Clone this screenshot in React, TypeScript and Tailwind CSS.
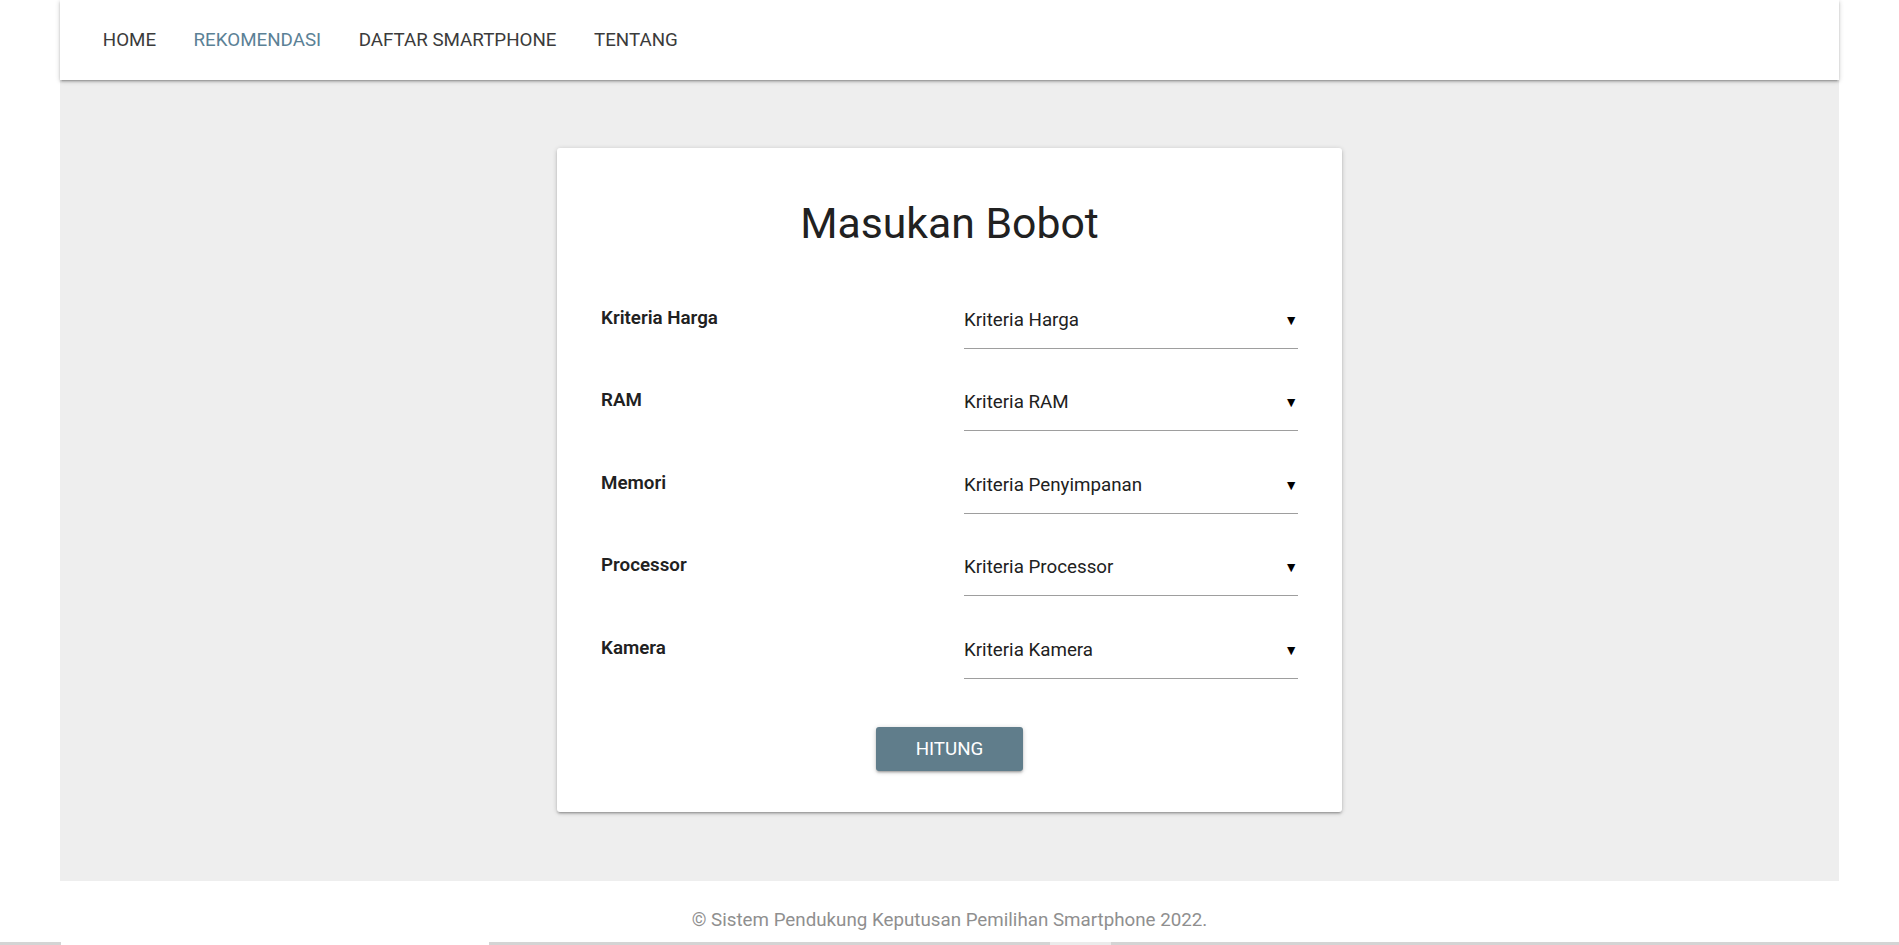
const NAV_LINKS = ['HOME', 'REKOMENDASI', 'DAFTAR SMARTPHONE', 'TENTANG'];

const CRITERIA = [
  { label: 'Kriteria Harga', placeholder: 'Kriteria Harga' },
  { label: 'RAM', placeholder: 'Kriteria RAM' },
  { label: 'Memori', placeholder: 'Kriteria Penyimpanan' },
  { label: 'Processor', placeholder: 'Kriteria Processor' },
  { label: 'Kamera', placeholder: 'Kriteria Kamera' },
];

const SHADOW =
  'shadow-[0_2px_2px_0_rgba(0,0,0,0.14),0_3px_1px_-2px_rgba(0,0,0,0.12),0_1px_5px_0_rgba(0,0,0,0.2)]';

function Navbar() {
  return (
    <nav className={`relative z-10 flex h-[80px] items-center bg-white pl-[24px] ${SHADOW}`}>
      {NAV_LINKS.map((link) => (
        <a
          key={link}
          href="#"
          className={
            'px-[18.75px] text-[18.75px] leading-[80px] ' +
            (link === 'REKOMENDASI' ? 'text-[#5b8196]' : 'text-[#3b3b3b]')
          }
        >
          {link}
        </a>
      ))}
    </nav>
  );
}

function CriteriaRow({ label, placeholder }: { label: string; placeholder: string }) {
  return (
    <div className="grid grid-cols-2 gap-x-[29px]">
      <div className="flex h-[57px] items-center pb-[5px] text-[18.75px] font-semibold text-[#212121]">
        {label}
      </div>
      <div className="flex h-[57px] items-center justify-between border-b border-[#9e9e9e] text-[18.75px] text-[#212121]">
        <span>{placeholder}</span>
        <span className="text-[14px] leading-none text-black">▼</span>
      </div>
    </div>
  );
}

export default function App() {
  return (
    <div className="min-h-[945px] bg-white font-['Roboto',sans-serif]">
      <div className="mx-[60px]">
        <Navbar />

        {/* Main content */}
        <main className="bg-[#eeeeee] pb-[69px] pt-[68px]">
          <div className={`mx-auto w-[785px] rounded-[3px] bg-white px-[44px] pb-[41px] pt-[49px] ${SHADOW}`}>
            <h1 className="text-center text-[42.75px] leading-[52px] text-[#212121]">Masukan Bobot</h1>

            <div className="mt-[43px] flex flex-col gap-[25.4px]">
              {CRITERIA.map((c) => (
                <CriteriaRow key={c.label} {...c} />
              ))}
            </div>

            <div className="mt-[48px] flex justify-center">
              <button
                className={`h-[44px] w-[147px] rounded-[3px] bg-[#607d8b] text-[18.75px] font-normal text-white ${SHADOW}`}
              >
                HITUNG
              </button>
            </div>
          </div>
        </main>

        <footer className="h-[61px] pt-[28px] text-center text-[18.75px] leading-[22px] text-[#8f8f8f]">
          © Sistem Pendukung Keputusan Pemilihan Smartphone 2022.
        </footer>
      </div>

      {/* horizontal scrollbar strip */}
      <div className="flex h-[4px] bg-[#d4d4d4]">
        <div className="ml-[61px] w-[428px] bg-white" />
        <div className="ml-[561px] w-[61px] bg-[#ebebeb]" />
      </div>
    </div>
  );
}
